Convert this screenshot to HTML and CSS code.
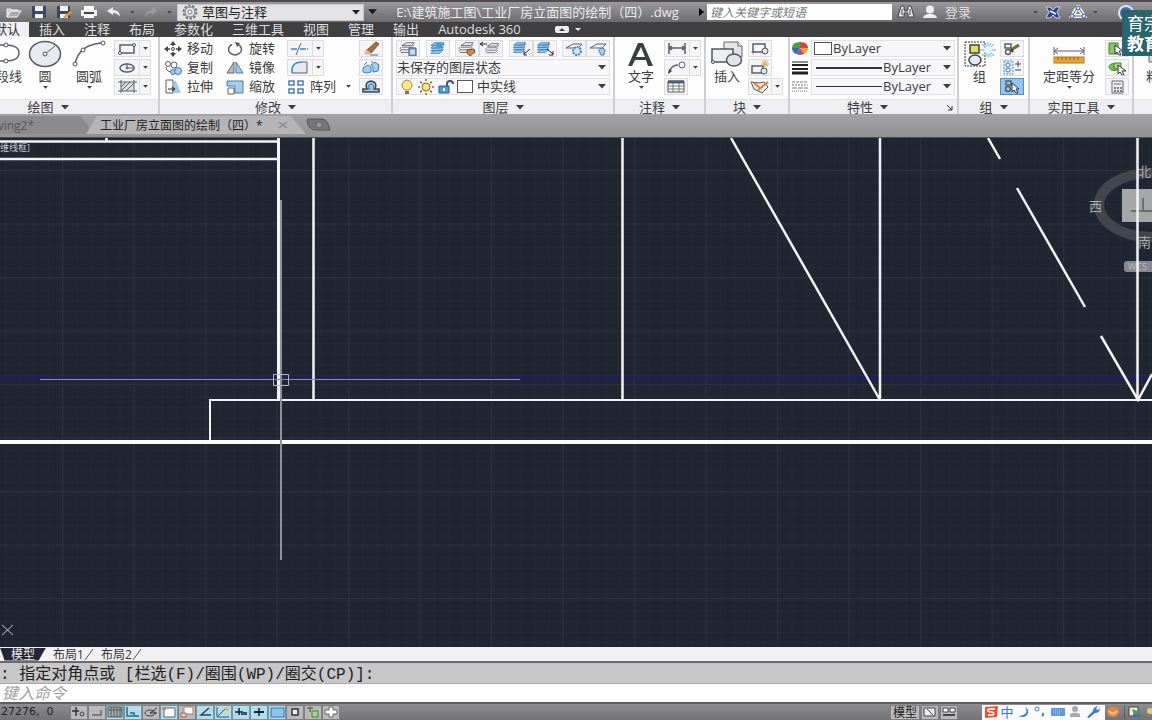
FILE: index.html
```html
<!DOCTYPE html>
<html lang="zh-CN">
<head>
<meta charset="utf-8">
<title>工业厂房立面图的绘制（四）.dwg</title>
<link rel="stylesheet" href="styles.css">
</head>
<body>
<svg class="defs" aria-hidden="true">
  <symbol id="caret" viewBox="0 0 8 5"><path d="M0 0h8L4 4.500z" fill="currentColor"/></symbol>
  <symbol id="layer" viewBox="0 0 24 17"><path class="g" d="M7 4l3-2h9l-3 3H5zM5 7l11 0 3-3M4 10h11l3-3M4 13h10l4-3M4 7l-1 2M4 10l-1 2"/></symbol>
  <symbol id="stacked" viewBox="0 0 24 17"><path class="p" d="M8 2h11l-4 3H4zM7 5l12-1-4 4H4zM7 8l11-1-3 4H4zM7 11l11-1-4 4H4z"/></symbol>
</svg>

<header class="titlebar">
  <div class="quick">
    <button aria-label="打开"><svg width="18" height="14"><path d="M2 12V4h4l1 1h6v2" fill="#ccc" stroke="#eee"/><path d="M2 12l4-6h10l-4 6z" fill="#aaa" stroke="#f5f5f5"/></svg></button>
    <button aria-label="保存"><svg width="16" height="14"><rect x="1" y="1" width="14" height="12" rx="1" fill="#3c465c"/><path d="M4 1h8v5H4zM4 9h8v4H4z" fill="#f1f1f1"/></svg></button>
    <button aria-label="另存为"><svg width="16" height="14"><rect x="1" y="1" width="13" height="12" rx="1" fill="#3c465c"/><path d="M4 1h8v5H4zM4 9h8v4H4z" fill="#f1f1f1"/><path d="M7 12l7-6 2 2-6 5z" fill="#d99b3c"/></svg></button>
    <button aria-label="打印"><svg width="18" height="14"><path d="M4 1h10v4H4z" fill="#fff"/><path d="M1 5h16v6H1z" fill="#eee"/><path d="M4 8h10" stroke="#444" stroke-width="2"/><path d="M4 10h10v3H4z" fill="#fff"/></svg></button>
    <button aria-label="放弃"><svg width="16" height="12"><path d="M1 5l6-4v3q7 0 7 7-2-4-7-4v2z" fill="#eee"/></svg></button>
    <button class="thin dark" aria-label="放弃列表"><svg width="5" height="3"><use href="#caret"/></svg></button>
    <button aria-label="重做"><svg width="16" height="12"><path d="M15 5L9 1v3Q2 4 2 11q2-4 7-4v2z" fill="#999"/></svg></button>
    <button class="thin dark" aria-label="重做列表"><svg width="5" height="3"><use href="#caret"/></svg></button>
  </div>
  <div class="workspace">
    <svg width="18" height="16" viewBox="0 0 18 16"><circle cx="9" cy="8" r="6.500" fill="none" stroke="#777" stroke-width="2" stroke-dasharray="2.500 1.500"/><circle cx="9" cy="8" r="5" fill="#e3e2e5" stroke="#777"/><circle cx="9" cy="8" r="2" fill="#fff" stroke="#777"/></svg>
    <select aria-label="工作空间"><option>草图与注释</option></select>
    <svg class="arrow" width="8" height="5"><use href="#caret"/></svg>
  </div>
  <button class="thin black" aria-label="自定义"><svg width="9" height="6"><use href="#caret"/></svg></button>
  <div class="filename">E:\建筑施工图\工业厂房立面图的绘制（四）.dwg</div>
  <button class="thin black" aria-label="展开"><svg width="5" height="8"><path d="M0 0l5 4-5 4z"/></svg></button>
  <input class="search" type="text" aria-label="搜索" placeholder="键入关键字或短语">
  <div class="account">
    <button aria-label="查找"><svg width="18" height="14"><path d="M4 1h3v4h4V1h3l3 11h-6V8H7v4H1z" fill="#e9e9e9" stroke="#444"/><path d="M5 4v6M13 4v6M7 6h4" stroke="#444"/></svg></button>
    <button aria-label="用户"><svg width="16" height="14"><ellipse cx="8" cy="4.500" rx="4" ry="4" fill="#eee"/><path d="M1 13q0-3 5-4h4q5 1 5 4z" fill="#eee"/></svg></button>
    <a class="login" href="#login">登录</a>
  </div>
  <div class="help">
    <button class="thin dark" aria-label="登录菜单"><svg width="5" height="3"><use href="#caret"/></svg></button>
    <button aria-label="交换"><svg width="16" height="13"><path d="M1 1h4l3 3 3-3h4l-3 5 3 6h-4L8 9l-3 3H1l3-6z" fill="#27448f" stroke="#cdd6ec"/><path d="M5 5l6 3" stroke="#fff" stroke-width="1.500"/></svg></button>
    <button aria-label="连接"><svg width="18" height="14"><path d="M9 2L3 11h12z" fill="none" stroke="#fff" stroke-width="4"/><path d="M9 2L3 11h12z" fill="none" stroke="#3f5590"/><circle cx="9" cy="3" r="2" fill="#dfe6f5" stroke="#3f5590"/><circle cx="3" cy="11" r="2" fill="#dfe6f5" stroke="#3f5590"/><circle cx="15" cy="11" r="2" fill="#dfe6f5" stroke="#3f5590"/></svg></button>
    <button class="thin dark" aria-label="连接菜单"><svg width="5" height="3"><use href="#caret"/></svg></button>
    <button class="ask" aria-label="帮助"><svg width="18" height="14"><circle cx="9" cy="8" r="7" fill="#456bb0" stroke="#dce4f2" stroke-width="2"/></svg></button>
  </div>
</header>
<div class="badge"><span>育宗</span><b>教育</b></div>

<nav class="menu">
  <div class="first"><a href="#home">默认</a></div>
  <a href="#insert">插入</a><a href="#annotate">注释</a><a href="#layout">布局</a><a href="#param">参数化</a><a href="#tools">三维工具</a><a href="#view">视图</a><a href="#manage">管理</a><a href="#output">输出</a><a href="#a360">Autodesk 360</a>
  <button aria-label="最小化功能区"><svg width="26" height="8"><rect width="14" height="7" rx="2" fill="#eee"/><path d="M4 5l3-3 3 3z" fill="#444"/><path d="M20 2h6l-3 3z" fill="#eee"/></svg></button>
</nav>

<main class="ribbon">
  <section class="panel draw">
    <div class="body">
      <button class="big cut"><svg width="38" height="32"><path class="g w" d="M0 7h20q14 0 14 8t-14 8h-5"/><circle class="n" cx="21" cy="7" r="2"/><circle class="n" cx="21" cy="23" r="2"/></svg><span>多段线</span><i></i></button>
      <button class="big"><svg width="34" height="32"><ellipse cx="17" cy="16" rx="15.500" ry="12.500" fill="#e8eaf0" stroke="#555c66" stroke-width="1.500"/><path class="g" d="M17 16l10-8"/><circle class="n" cx="17" cy="16" r="2"/></svg><span>圆</span><svg width="5" height="3"><use href="#caret"/></svg></button>
      <button class="big"><svg width="34" height="32"><path class="g w" d="M3 26Q7 6 31 5"/><circle class="n" cx="3" cy="26" r="2"/><circle class="n" cx="11" cy="12" r="2"/><circle class="n" cx="31" cy="5" r="2"/></svg><span>圆弧</span><svg width="5" height="3"><use href="#caret"/></svg></button>
      <div class="stack">
        <div class="split"><button aria-label="矩形"><svg width="24" height="15"><path class="g w" d="M5 4h14v8H5z"/><circle class="n" cx="5" cy="12" r="1.500"/><circle class="n" cx="19" cy="4" r="1.500"/></svg></button><button aria-label="矩形选项"><svg width="5" height="3"><use href="#caret"/></svg></button></div>
        <div class="split"><button aria-label="椭圆"><svg width="24" height="15"><ellipse class="g w" cx="12" cy="8" rx="7" ry="4"/><path class="g" d="M12 8V3M12 8h8"/><circle class="n" cx="12" cy="8" r="1"/></svg></button><button aria-label="椭圆选项"><svg width="5" height="3"><use href="#caret"/></svg></button></div>
        <div class="split"><button aria-label="图案填充"><svg width="24" height="15"><path d="M6 3h13v9H6z" fill="#ddd"/><path class="g" d="M6 8l5-5M6 12l9-9M11 12l8-8M3 3h19M3 12h19M6 1v13M19 1v13"/></svg></button><button aria-label="填充选项"><svg width="5" height="3"><use href="#caret"/></svg></button></div>
      </div>
    </div>
    <button class="foot">绘图<svg width="8" height="5"><use href="#caret"/></svg></button>
  </section>

  <section class="panel modify">
    <div class="body">
      <button class="tool"><svg width="18" height="16"><path d="M9 2v12M2 8h14" stroke="#444" stroke-width="1.500"/><path d="M9 0l3 4H6zM9 16l3-4H6zM0 8l4-3v6zM18 8l-4-3v6z" fill="#444"/><circle cx="9" cy="8" r="3" fill="#fff"/><circle cx="9" cy="8" r="1.500" fill="#fff" stroke="#444"/></svg>移动</button>
      <button class="tool"><svg width="18" height="16"><path class="g w" d="M6 3.500a6.500 5.500 0 1 0 6 0"/><path d="M9 1l5 1-3 4z" fill="#555"/></svg>旋转</button>
      <div class="split"><button aria-label="修剪"><svg width="24" height="15"><path d="M3 8h7M12 8h8" stroke="#2e8bd0" stroke-width="1.500" stroke-dasharray="6 1"/><path class="g" d="M8 14l5-12"/></svg></button><button aria-label="修剪选项"><svg width="5" height="3"><use href="#caret"/></svg></button></div>
      <button class="sq" aria-label="删除"><svg width="22" height="15"><path d="M7 9l9-8 3 2-8 9z" fill="#a9703e" stroke="#70502f"/><path d="M6 8l5 4-2 2-5-1z" fill="#e9b49b"/><path class="g" d="M10 14h8"/></svg></button>
      <button class="tool"><svg width="18" height="16"><circle class="g" cx="4" cy="4" r="2.500"/><circle class="g" cx="10" cy="5" r="3"/><path d="M2 7q0 4 5 5" fill="none" stroke="#555"/><circle class="p" cx="9" cy="12" r="2.500"/><circle class="p" cx="14" cy="11" r="3.500"/></svg>复制</button>
      <button class="tool"><svg width="18" height="16"><path d="M8 2v11H1z" fill="#bbb" stroke="#666"/><path class="p" d="M10 2v11h7z"/></svg>镜像</button>
      <div class="split"><button aria-label="圆角"><svg width="24" height="15"><path d="M4 13V9Q5 2 14 2h5v11z" fill="#e6e8ed"/><path d="M4 13V9Q5 2 14 2" fill="none" stroke="#2e8bd0" stroke-width="1.500"/><path class="g" d="M14 2h5v11H4"/></svg></button><button aria-label="圆角选项"><svg width="5" height="3"><use href="#caret"/></svg></button></div>
      <button class="sq" aria-label="分解"><svg width="22" height="15"><path class="p" d="M3 8l5-3 3 2v5l-4 1-4-1zM11 5l4-3 4 3-1 6-5 1V7z"/><path d="M4 5l3-3M12 3V1" stroke="#2e7dbb"/></svg></button>
      <button class="tool"><svg width="18" height="16"><path class="g" d="M2 1h7v13H2z"/><path d="M10 2h2l5 12h-7z" fill="#9dccef"/><path d="M4 10h6M8 8l3 2-3 2" fill="none" stroke="#222"/></svg>拉伸</button>
      <button class="tool"><svg width="18" height="16"><path class="p" d="M1 2h16v12H9V7H1z"/><path class="g" d="M2 9h6v6H2z"/></svg>缩放</button>
      <button class="tool"><svg width="18" height="16"><path d="M2 2h5v4H2zM11 2h5v4h-5zM11 10h5v4h-5zM2 10h5v4H2z" fill="#fff" stroke="#4a7fb0" stroke-width="1.500"/></svg>阵列<svg class="right" width="5" height="3"><use href="#caret"/></svg></button>
      <button class="sq" aria-label="偏移"><svg width="22" height="15"><path d="M3 13v-3h4Q4 3 11 2q7 1 4 8h4v3z" fill="#9dccef" stroke="#345" stroke-width="1.500"/><path class="g" d="M7 10h3Q7 6 11 5q4 1 2 5h2"/></svg></button>
    </div>
    <button class="foot">修改<svg width="8" height="5"><use href="#caret"/></svg></button>
  </section>

  <section class="panel layers">
    <div class="body rows">
      <div class="row spread">
        <button class="sq" aria-label="图层特性"><svg width="22" height="15"><use href="#layer" width="22" height="15"/><path d="M12 7h7v8h-7z" fill="#8fb7dd" stroke="#456"/><path d="M13 10h5M13 12h5" stroke="#fff"/></svg></button>
        <button class="sq" aria-label="置为当前"><svg width="22" height="15"><use href="#stacked" width="22" height="15"/><circle cx="12" cy="4" r="3" fill="#4b9bd8"/></svg></button>
        <div class="pair"><button class="sq" aria-label="匹配图层"><svg width="22" height="15"><use href="#layer" width="22" height="15"/><path d="M11 9l7-1 1 3-5 4-3-3z" fill="#d58a43" stroke="#7a4a22"/></svg></button><button class="sq" aria-label="上一个图层"><svg width="22" height="15"><g transform="translate(3 1)"><use href="#layer" width="20" height="14"/></g><path d="M1 3h6M3 1L0 3l3 2" stroke="#222" fill="none"/></svg></button></div>
        <div class="pair"><button class="sq" aria-label="隔离"><svg width="22" height="15"><use href="#stacked" width="20" height="14"/><path d="M20 8l-6 5M14 10v4h3" stroke="#222" fill="none"/></svg></button><button class="sq" aria-label="取消隔离"><svg width="22" height="15"><use href="#stacked" width="20" height="14"/><path d="M13 8l6 5M19 10v4h-4" stroke="#222" fill="none"/></svg></button></div>
        <div class="pair"><button class="sq" aria-label="冻结"><svg width="22" height="15"><path class="g" d="M3 7l7-4h9l-4 4z"/><circle cx="14" cy="10" r="4" fill="#cfe6f8" stroke="#3a86c4" stroke-width="2" stroke-dasharray="2 1"/></svg></button><button class="sq" aria-label="关闭图层"><svg width="22" height="15"><path class="g" d="M3 7l7-4h9l-4 4z"/><path class="p" d="M13 12q-3-4 2-5 5 1 2 5v2h-3z"/></svg></button></div>
      </div>
      <div class="combo"><select aria-label="图层状态"><option>未保存的图层状态</option></select><svg class="arrow" width="8" height="5"><use href="#caret"/></svg></div>
      <div class="combo icons">
        <button aria-label="开关图层"><svg width="16" height="16"><path d="M6 11Q2 8 3 5q2-4 5-4t5 4q1 3-3 6z" fill="#ffe98a" stroke="#a48c32"/><path d="M6 12h4v3H6z" fill="#777"/></svg></button>
        <button aria-label="冻结图层"><svg width="18" height="16"><circle cx="9" cy="8" r="4" fill="#ffe08a" stroke="#8a6d25"/><path d="M9 0v2M9 14v2M1 8h2M15 8h2M3 3l2 1M13 12l2 1M3 13l2-1M13 4l2-1" stroke="#8a6d25" stroke-width="1.500"/></svg></button>
        <button aria-label="锁定图层"><svg width="18" height="16"><path d="M10 7V5q0-3 3-3 3 0 3 3" fill="none" stroke="#456" stroke-width="2"/><path d="M2 7h10v7H2z" fill="#4d9ad4" stroke="#275f8e"/><path d="M6 9h2v3H6z" fill="#fff"/></svg></button>
        <span class="swatch"></span>
        <select aria-label="图层"><option>中实线</option></select><svg class="arrow" width="8" height="5"><use href="#caret"/></svg>
      </div>
    </div>
    <button class="foot">图层<svg width="8" height="5"><use href="#caret"/></svg></button>
  </section>

  <section class="panel annotate">
    <div class="body">
      <button class="big"><svg width="30" height="32"><path d="M2 28L12 5h5l10 23h-5l-2-6H9l-3 6zM10 19h9l-4-10z" fill="#3c3f45"/></svg><span>文字</span><svg width="5" height="3"><use href="#caret"/></svg></button>
      <div class="stack">
        <div class="split"><button aria-label="标注"><svg width="24" height="15"><path class="g w" d="M4 2v11M20 2v11M4 7h16M7 5L4 7l3 2M17 5l3 2-3 2"/></svg></button><button aria-label="标注选项"><svg width="5" height="3"><use href="#caret"/></svg></button></div>
        <div class="split"><button aria-label="引线"><svg width="24" height="15"><path class="g w" d="M4 13q2-8 9-8"/><circle class="g" cx="17" cy="5" r="3"/><path d="M3 14l1-5 3 2z" fill="#444"/></svg></button><button aria-label="引线选项"><svg width="5" height="3"><use href="#caret"/></svg></button></div>
        <button class="sq" aria-label="表格"><svg width="22" height="15"><path d="M3 2h16v11H3z" fill="#fff" stroke="#555"/><path d="M3 3h16" stroke="#4c5f7c" stroke-width="3"/><path d="M3 7h16M3 10h16M8 4v9M14 4v9" stroke="#777"/></svg></button>
      </div>
    </div>
    <button class="foot">注释<svg width="8" height="5"><use href="#caret"/></svg></button>
  </section>

  <section class="panel block">
    <div class="body">
      <button class="big"><svg width="34" height="32"><path d="M14 4h14l4 4v11H14z" fill="#e2e4ea" stroke="#666"/><path d="M28 4v4h4" fill="#fff" stroke="#666"/><path d="M2 11h21v13H2z" fill="#eceef3" stroke="#555" stroke-width="1.500"/><ellipse cx="24" cy="22" rx="7.500" ry="6" fill="#e2e4ea" stroke="#555" stroke-width="1.500"/><circle class="n" cx="3" cy="24" r="1.500"/></svg><span>插入</span><i></i></button>
      <div class="stack">
        <button class="sq" aria-label="创建块"><svg width="22" height="15"><path class="g w" d="M4 3h12v8H4z"/><circle cx="16" cy="10" r="3" fill="#e2e4ea" stroke="#555"/><circle class="n" cx="4" cy="11" r="1"/></svg></button>
        <button class="sq" aria-label="编辑块"><svg width="22" height="15"><path class="g w" d="M3 6h11v7H3z"/><circle cx="15" cy="11" r="3" fill="#d8e6f4" stroke="#456"/><path d="M16 0v7M12 4h8M13 1l6 5M19 1l-6 5" stroke="#e5a33c"/></svg></button>
        <div class="split"><button aria-label="块属性"><svg width="22" height="15"><path d="M2 3l8 1 5-1 4 5-6 6-8-4z" fill="#eee" stroke="#555"/><path d="M5 4l6 5M9 11l10-8" fill="none" stroke="#d58234" stroke-width="2"/></svg></button><button aria-label="块属性选项"><svg width="5" height="3"><use href="#caret"/></svg></button></div>
      </div>
    </div>
    <button class="foot">块<svg width="8" height="5"><use href="#caret"/></svg></button>
  </section>

  <section class="panel props">
    <div class="body rows">
      <div class="row"><svg width="18" height="15"><path d="M9 7L1 7Q1 1 9 1z" fill="#4d9c4c"/><path d="M9 7V1q8 0 8 6z" fill="#d4453a"/><path d="M9 7h8q0 4-4 6z" fill="#e8a52d"/><path d="M9 7l4 6q-4 2-8 0z" fill="#b04a92"/><path d="M9 7l-4 6Q1 11 1 7z" fill="#3568c2"/></svg><div class="combo"><span class="swatch"></span><select aria-label="颜色"><option>ByLayer</option></select><svg class="arrow" width="8" height="5"><use href="#caret"/></svg></div></div>
      <div class="row"><svg width="18" height="15"><path d="M1 2h16" stroke="#222"/><path d="M1 5h16" stroke="#222" stroke-width="2"/><path d="M1 9h16" stroke="#222" stroke-width="2"/><path d="M1 13h16" stroke="#222" stroke-width="3"/></svg><div class="combo"><span class="line heavy"></span><select aria-label="线宽"><option>ByLayer</option></select><svg class="arrow" width="8" height="5"><use href="#caret"/></svg></div></div>
      <div class="row"><svg width="18" height="15"><path d="M1 3h16" stroke="#777" stroke-dasharray="3 1"/><path d="M1 6h16" stroke="#777" stroke-dasharray="2 1"/><path d="M1 9h16" stroke="#777" stroke-dasharray="5 1"/><path d="M1 12h16" stroke="#777" stroke-dasharray="1 1"/></svg><div class="combo"><span class="line"></span><select aria-label="线型"><option>ByLayer</option></select><svg class="arrow" width="8" height="5"><use href="#caret"/></svg></div></div>
    </div>
    <button class="foot">特性<svg width="8" height="5"><use href="#caret"/></svg><svg class="corner" width="6" height="6"><path d="M0 0l5 5M5 1v4H1" stroke="#333" fill="none"/></svg></button>
  </section>

  <section class="panel group">
    <div class="body">
      <button class="big"><svg width="34" height="32"><rect x="2" y="4" width="20" height="24" fill="#f7f7f7" stroke="#333" stroke-dasharray="2 1"/><path d="M7 7h9v8H7z" fill="#dbe05a" stroke="#444" stroke-width="1.500"/><ellipse cx="12" cy="22" rx="6" ry="5" fill="#e7eaf0" stroke="#444" stroke-width="1.500"/><path d="M25 4v16M17 12h16M19 6l12 12M31 6L19 18M22 5l6 14M28 5l-6 14" stroke="#5aaee6"/><circle cx="25" cy="12" r="4" fill="#e7f6ff"/></svg><span>组</span><i></i></button>
      <div class="stack">
        <button class="sq" aria-label="解除编组"><svg width="22" height="15"><path class="g w" d="M4 3h6v4H4z"/><circle class="g w" cx="7" cy="11" r="2.500"/><path d="M10 9l8-5" stroke="#7c6a2e" stroke-width="3"/><path d="M10 8l2 3" stroke="#333" stroke-width="2"/></svg></button>
        <button class="sq" aria-label="组编辑"><svg width="22" height="15"><rect x="3" y="1" width="9" height="13" fill="#d6e8f8" stroke="#5b93c4" stroke-dasharray="2 1"/><circle cx="7" cy="5" r="2" fill="#fff" stroke="#47a"/><circle cx="7" cy="10" r="2" fill="#fff" stroke="#47a"/><path d="M14 4h6M17 1v6M14 10h6" stroke="#444"/></svg></button>
        <button class="sq on" aria-label="启用组选择" aria-pressed="true"><svg width="22" height="15"><path class="g w" d="M5 2h5v4H5z"/><circle class="g w" cx="7" cy="10" r="2.500"/><path d="M11 4l7 6-3 0 2 4-2 0-2-3-2 2z" fill="#fff" stroke="#234"/></svg></button>
      </div>
    </div>
    <button class="foot">组<svg width="8" height="5"><use href="#caret"/></svg></button>
  </section>

  <section class="panel utils">
    <div class="body">
      <button class="big"><svg width="34" height="32"><path class="g" d="M2 9v8M32 9v8M2 13h30M6 10l-4 3 4 3M28 10l4 3-4 3"/><rect x="2" y="19" width="30" height="6" fill="#e8a436" stroke="#b77a1c"/><path d="M6 19v3M10 19v3M14 19v3M18 19v3M22 19v3M26 19v3" stroke="#8a5a12"/></svg><span>定距等分</span><svg width="5" height="3"><use href="#caret"/></svg></button>
      <div class="stack">
        <button class="sq" aria-label="快速选择"><svg width="22" height="15"><path d="M3 2h9v11H3z" fill="#8ac46c" stroke="#43862a"/><path d="M9 4l8 6-4 0 2 4-2 0-2-3-2 2z" fill="#fff" stroke="#333"/></svg></button>
        <button class="sq" aria-label="全部选择"><svg width="22" height="15"><ellipse cx="8" cy="7" rx="5" ry="3.500" fill="#7fbd62" stroke="#43862a"/><path d="M8 3h7v6H8z" fill="#a5d68c" stroke="#43862a"/><path d="M12 5l8 6-4 0 2 4-2 0-2-3-2 2z" fill="#fff" stroke="#333"/></svg></button>
        <button class="sq" aria-label="计算器"><svg width="22" height="15"><path d="M6 2h11v12H6z" fill="#eef0f3" stroke="#666"/><path d="M8 4h7v2H8z" fill="#aab"/><path d="M8 9h8M8 12h8" stroke="#555" stroke-width="1.500" stroke-dasharray="2 1"/></svg></button>
      </div>
    </div>
    <button class="foot">实用工具<svg width="8" height="5"><use href="#caret"/></svg></button>
  </section>

  <section class="panel clip">
    <div class="body">
      <button class="big"><svg width="34" height="32"><path d="M7 9h18v15H7z" fill="#ddd" stroke="#666"/></svg><span>粘贴</span></button>
    </div>
    <div class="foot"></div>
  </section>
</main>

<nav class="docs">
  <a class="doc prev" href="#drawing2"><span>Drawing2*</span></a>
  <div class="doc current"><a href="#factory">工业厂房立面图的绘制（四）*</a><button aria-label="关闭"><svg width="10" height="8"><path d="M1 1l8 6M9 1L1 7" stroke="#888" stroke-width="1.500"/></svg></button></div>
  <button class="plus" aria-label="新建"><svg width="26" height="14"><path d="M1 2q0-1 2-1h13q4 0 6 5l2 6H10Q2 12 1 2z" fill="#777" stroke="#555"/><circle cx="13" cy="7" r="3" fill="#999" stroke="#666"/></svg></button>
</nav>

<section class="canvas">
  <svg width="100%" height="100%">
    <defs>
      <pattern id="minor" width="14.300" height="10.700" patternUnits="userSpaceOnUse" x="5" y="1.700"><path d="M0 .5h14.300M.5 0v10.700" stroke="#232a36" fill="none"/></pattern>
      <pattern id="major" width="71.500" height="53.500" patternUnits="userSpaceOnUse" x="62" y="32"><path d="M0 .5h71.500M.5 0v53.500" stroke="#2a303d" fill="none"/></pattern>
    </defs>
    <rect width="100%" height="100%" fill="#1f2531"/>
    <rect width="100%" height="100%" fill="url(#minor)"/>
    <rect width="100%" height="100%" fill="url(#major)"/>
    <g transform="translate(0 -138)">
      <ellipse cx="1151" cy="205" rx="52" ry="32" fill="none" stroke="#41464f" stroke-width="10"/>
      <rect x="1122" y="189" width="60" height="33" fill="#a5a6a8"/>
      <path d="M1131 211h40M1143 198v13" stroke="#6c6e73" stroke-width="2"/>
      <rect x="1124" y="261" width="50" height="11" rx="3" fill="#858890"/>
      <g class="compass"><text x="1138" y="176">北</text><text x="1138" y="247">南</text><text x="1089" y="211">西</text><text class="wcs" x="1128" y="270">WCS</text></g>
      <path d="M0 378.500h2400" stroke="#1c1d6b" stroke-width="3"/>
      <g fill="none" stroke="#f2f3f7" stroke-width="2.500">
        <path d="M0 141.500h279M0 159h279M106.500 137v4M313.500 137v263M622.500 137v263M880 137v263M1137.500 137v263M731 138l149 262M988 138l12 21M1017 188l68 119M1101 336l37 64 14-26"/>
        <path d="M278.500 137v263" stroke-width="3"/>
        <path d="M210 441v-41H2400" stroke-width="2"/>
        <path d="M0 442h2400" stroke="#fff" stroke-width="4"/>
      </g>
      <path d="M40 379.500h480" stroke="#878aa8"/>
      <path d="M281 200v360" stroke="#8f9299" stroke-width="2"/>
      <path d="M273.500 374.500h15v11h-15z" fill="none" stroke="#b2b4bc"/>
      <path d="M2 625l11 10M13 625l-11 10" stroke="#c7c9ce"/>
      <text class="mode" x="0" y="151">维线框]</text>
    </g>
  </svg>
</section>

<nav class="sheets">
  <a class="on" href="#model">模型</a><a href="#l1">布局1</a><svg width="10" height="13"><path d="M1 12L9 1" stroke="#555"/></svg><a href="#l2">布局2</a><svg width="10" height="13"><path d="M1 12L9 1" stroke="#555"/></svg>
</nav>

<section class="command">
  <div class="history">: 指定对角点或 [栏选(F)/圈围(WP)/圈交(CP)]:</div>
  <input type="text" aria-label="命令" placeholder="键入命令">
</section>

<footer class="status">
  <span class="coords">27276,&nbsp; 0</span>
  <div class="modes">
    <button aria-label="推断约束"><svg width="16" height="12"><path d="M1 5h7M5 1v9" stroke="#333" stroke-width="1.500"/><circle cx="11" cy="8" r="2" fill="none" stroke="#444"/></svg></button>
    <button aria-label="捕捉"><svg width="16" height="12"><path d="M3 9h9V4" fill="none" stroke="#666" stroke-width="1.500"/></svg></button>
    <button class="on" aria-label="栅格"><svg width="16" height="12"><path d="M1 1h14v10H1z" fill="#a9b2b7" stroke="#555"/><path d="M4 1v10M7 1v10M10 1v10M13 1v10M1 4h14" stroke="#555"/></svg></button>
    <button class="on" aria-label="正交"><svg width="16" height="12"><path d="M2 1v9h12M5 7h4v3" fill="none" stroke="#266b86" stroke-width="1.500"/></svg></button>
    <button aria-label="极轴"><svg width="16" height="12"><ellipse cx="7" cy="7" rx="5" ry="3" fill="none" stroke="#444"/><path d="M7 7l7-5M7 7h7" stroke="#333"/></svg></button>
    <button class="on" aria-label="对象捕捉"><svg width="16" height="12"><path d="M3 2h11v9H3z" fill="#fff" stroke="#567"/><path d="M1 1h4v3H1z" fill="#d98950"/></svg></button>
    <button aria-label="三维捕捉"><svg width="16" height="12"><path d="M5 1h9v7H5z" fill="#fff" stroke="#b76"/><path d="M2 7h5v4H2z" fill="#e6cfc5" stroke="#a65"/></svg></button>
    <button class="on" aria-label="追踪"><svg width="16" height="12"><path d="M12 2L4 9h10" fill="none" stroke="#246" stroke-width="1.500"/></svg></button>
    <button class="on" aria-label="动态UCS"><svg width="16" height="12"><path d="M2 1v10h12M3 10l7-7" fill="none" stroke="#357"/><circle cx="12" cy="3" r="2" fill="#e0bd45"/></svg></button>
    <button class="on" aria-label="动态输入"><svg width="16" height="12"><path d="M2 6h8M6 2v7" stroke="#123" stroke-width="1.500"/><path d="M8 6h6v3H8z" fill="#357"/></svg></button>
    <button class="on" aria-label="线宽"><svg width="16" height="12"><path d="M3 6h10" stroke="#123" stroke-width="2"/><path d="M8 2v8" stroke="#123" stroke-width="1.500"/></svg></button>
    <button class="on" aria-label="透明度"><svg width="16" height="12"><rect x="2" y="2" width="13" height="9" fill="#8fc3ee" stroke="#3775aa"/></svg></button>
    <button aria-label="快捷特性"><svg width="16" height="12"><path d="M5 3h6v6H5z" fill="#eee" stroke="#333" stroke-width="1.500"/></svg></button>
    <button aria-label="选择循环"><svg width="16" height="12"><path d="M2 2h6M5 1v5" stroke="#444"/><path d="M7 5h6v6H7z" fill="#a5d68c" stroke="#43862a"/></svg></button>
    <button aria-label="注释监视器"><svg width="16" height="12"><path d="M6 1h4v3h4v4h-4v3H6V8H2V4h4z" fill="#fff" stroke="#666"/></svg></button>
  </div>
  <div class="space"><button class="name">模型</button>
    <button aria-label="布局"><svg width="16" height="12"><path d="M2 2h11v8H2z" fill="#eee" stroke="#444"/><path d="M5 3l6 6" stroke="#444"/></svg></button>
    <button aria-label="快速查看"><svg width="16" height="12"><path d="M2 2h5v4H2zM9 2h5v4H9z" fill="#fff" stroke="#444"/><path d="M2 9h12" stroke="#444" stroke-width="2"/></svg></button>
  </div>
  <div class="ime">
    <svg width="16" height="14"><path d="M2 2l13-1-1 11-12 1z" fill="#df5534"/><path d="M12 4H7q-3 0-2 2 1 1 4 1 3 1 1 3H5" fill="none" stroke="#fff" stroke-width="1.500"/></svg>
    <span>中</span>
    <svg width="16" height="14"><path d="M10 2q5 8-7 9 8 3 10-3 1-4-3-6z" fill="#3d7fc9"/></svg>
    <svg width="16" height="14"><circle cx="5" cy="4" r="2" fill="none" stroke="#3d7fc9"/><path d="M11 8v2l-1 1" stroke="#3d7fc9" stroke-width="2" fill="none"/></svg>
    <svg width="16" height="14"><rect x="1" y="3" width="14" height="8" rx="1" fill="#5c98d8"/><path d="M3 5h10M3 7h10M5 9h6" stroke="#a9caee" stroke-dasharray="1 1"/></svg>
    <svg width="16" height="14"><circle cx="8" cy="4" r="3" fill="#aaa"/><path d="M3 12V9q5-3 10 0v3z" fill="#aaa"/></svg>
    <svg width="16" height="14"><path d="M2 12l6-6q0-4 5-5l-2 3 2 1 2-2q0 5-5 5l-6 5z" fill="#3d7fc9"/></svg>
  </div>
  <div class="tray">
    <svg width="14" height="12"><ellipse cx="7" cy="6" rx="6" ry="5" fill="#ec8536"/><path d="M3 5q4 5 8 0" stroke="#f9cfa5" fill="none" stroke-width="2"/></svg>
    <svg width="28" height="14"><path d="M0 0v14" stroke="#444"/><path d="M5 2h9v9H5z" fill="#eee" stroke="#444"/><path d="M8 4l9 3-7 4z" fill="#5c9b42"/><path d="M9 9h8v3H9z" fill="#4272b8"/><circle cx="26" cy="6" r="3" fill="#d8d27c"/></svg>
  </div>
</footer>
</body>
</html>
```

FILE: styles.css
```css
* { box-sizing: border-box; }
body {
  margin: 0;
  height: 100vh;
  display: flex;
  flex-direction: column;
  overflow: hidden;
  position: relative;
  font: 13px/15px "Open Sans", "Noto Sans CJK SC", sans-serif;
  color: #3d3d40;
}
button, select, input { font: inherit; color: inherit; margin: 0; padding: 0; border: 0; background: none; }
button { display: flex; align-items: center; justify-content: center; white-space: nowrap; }
select { appearance: none; outline: 0; min-width: 0; }
a { color: inherit; text-decoration: none; white-space: nowrap; }
svg { display: block; flex: none; }
.defs { position: absolute; width: 0; height: 0; }
.g { fill: none; stroke: #5a606a; stroke-width: 1; }
.w { stroke-width: 1.5; }
.n { fill: #fff; stroke: #4a4f58; }
.p { fill: #a4cdee; stroke: #3f7fb3; }

/* Title bar */
.titlebar {
  flex: none;
  height: 22px;
  display: flex;
  align-items: center;
  border-top: 2px solid #514a50;
  background: linear-gradient(#9a999c, #6c6b6e);
}
.quick, .account, .help { display: flex; align-items: center; }
.quick { padding-left: 1px; padding-right: 2px; }
.quick button { width: 25px; }
.quick .thin, .thin { width: 12px; flex: none; }
.dark { color: #4a4a4c; }
.black { color: #161616; }
.workspace {
  width: 187px;
  height: 17px;
  display: flex;
  align-items: center;
  gap: 3px;
  padding: 0 3px;
  background: #e3e2e5;
  border: 1px solid #c8c7ca;
  color: #222;
}
.workspace select { flex: 1; }
.titlebar .workspace + .thin { width: 16px; }
.filename {
  flex: 1;
  text-align: center;
  white-space: nowrap;
  overflow: hidden;
  color: #ececee;
}
.search { width: 185px; height: 16px; background: #fff; padding-left: 3px; font-size: 12px; }
.search::placeholder { font-style: italic; color: #77767a; opacity: 1; }
.account { padding-left: 2px; width: 138px; }
.account button { width: 24px; }
.login { padding-left: 3px; color: #dedee0; }
.help button { width: 25px; }
.help .thin { width: 10px; }
.help { width: 122px; }
.help .ask { margin-left: 13px; }
.badge {
  position: absolute;
  top: 10px;
  right: 0;
  z-index: 1;
  width: 30px;
  height: 46px;
  padding: 3px 0 0 5px;
  overflow: hidden;
  display: flex;
  flex-direction: column;
  white-space: nowrap;
  background: #2c646e;
  color: #fff;
  font: 17px/20px "Noto Sans CJK SC", sans-serif;
}

/* Ribbon tabs */
.menu {
  flex: none;
  height: 15px;
  display: flex;
  align-items: center;
  gap: 19px;
  background: #403f41;
  color: #dededf;
}
.menu .first {
  width: 29px;
  height: 15px;
  margin-right: -9px;
  padding-right: 9px;
  display: flex;
  justify-content: flex-end;
  overflow: hidden;
  background: #f0eff2;
  color: #333;
}
.menu button { margin-left: 15px; }

/* Ribbon */
.ribbon { flex: none; display: flex; background: #fdfdfe; overflow: hidden; }
.panel { flex: none; display: flex; flex-direction: column; border-right: 2px solid #cfced3; }
.body { height: 62px; padding: 3px 3px 0; display: flex; }
.foot {
  height: 15px;
  gap: 7px;
  display: flex;
  position: relative;
  border-top: 1px solid #e3e2e6;
  background: #efeef2;
  line-height: 13px;
}
.corner { position: absolute; right: 4px; top: 5px; }
.big { flex-direction: column; justify-content: flex-start; width: 44px; overflow: hidden; line-height: 12px; margin-top: -2px; }
.big span { margin: 0 0 3px; line-height: 13px; }
.stack { display: grid; grid-template-rows: repeat(3, 17px); gap: 2px; justify-items: start; }
.sq, .split { border: 1px solid #dcdce1; background: #f5f5f8; height: 17px; }
.sq { width: 24px; }
.split { display: flex; justify-self: start; }
.split button { height: 15px; }
.split button + button { width: 11px; border-left: 1px solid #dcdce1; }
.on.sq { background: #93c4ee; border-color: #4f8fcb; }
.tool { justify-content: flex-start; gap: 5px; }
.tool .right { margin-left: 5px; }

.draw { width: 160px; }
.draw .body { padding-left: 0; }
.draw .cut { width: 23px; align-items: flex-end; }
.draw .cut span { margin-right: 1px; }
.draw .stack { margin-left: 3px; }
.draw .foot { padding-right: 62px; }
.modify { width: 233px; }
.modify .body {
  display: grid;
  grid-template-columns: 62px 61px 72px 24px;
  grid-template-rows: repeat(3, 17px);
  gap: 2px 0;
  padding-left: 4px;
}
.layers { width: 222px; }
.rows { flex-direction: column; gap: 2px; }
.row { display: flex; align-items: center; gap: 2px; height: 17px; }
.spread { justify-content: space-between; }
.pair { display: flex; }
.combo {
  flex: none;
  height: 17px;
  display: flex;
  align-items: center;
  border: 1px solid #e0e0e5;
  background: #f7f7fa;
  padding: 0 3px 0 0;
}
.combo select { flex: 1; }
.icons { gap: 2px; padding-left: 2px; }
.swatch { flex: none; width: 16px; height: 13px; border: 1px solid #555; background: #fff; margin-right: 2px; }
.annotate { width: 91px; }
.annotate .big { width: 47px; }
.block { width: 84px; }
.block .body { padding-left: 0; }
.block .big { width: 42px; }
.props { width: 169px; }
.props .body { padding: 3px 2px 0 1px; }
.props .combo { flex: 1; gap: 1px; padding-left: 2px; }
.props .swatch { margin: 0; width: 18px; }
.line { flex: none; width: 66px; margin-left: 2px; border-top: 1px solid #333; }
.heavy { border-top-width: 2px; }
.props .foot { padding-right: 12px; }
.group { width: 71px; }
.group .body { padding-left: 0; }
.group .big { width: 41px; }
.utils { width: 104px; }
.utils .big { width: 73px; }
.clip { flex: 1 0 18px; border: 0; overflow: hidden; width: 0; }
.clip .big { width: 44px; flex: none; }

/* Document tabs */
.docs {
  flex: none;
  height: 24px;
  display: flex;
  align-items: flex-end;
  padding-bottom: 3px;
  border-bottom: 1px solid #4d4d50;
  background: linear-gradient(#a3a2a5, #929194);
  font-size: 12px;
}
.doc { height: 18px; display: flex; align-items: center; }
.prev { width: 94px; color: #565558; background: #8b8a8d; overflow: hidden; justify-content: flex-end; padding-right: 60px; clip-path: polygon(0 0, 86% 0, 100% 100%, 0 100%); }
.current {
  width: 220px;
  margin-left: -8px;
  padding: 0 18px 0 14px;
  justify-content: space-between;
  background: #b5b4b7;
  color: #222;
  clip-path: polygon(5% 0, 93% 0, 100% 100%, 0 100%);
}
.plus { height: 18px; }

/* Drawing area */
.canvas { flex: 1; min-height: 0; overflow: hidden; background: #1f2531; }
.compass { font-size: 13px; fill: #a9abb0; }
.wcs { font-size: 9px; fill: #b9bbc0; }
.mode { font-size: 9px; fill: #cdced2; }

/* Layout tabs */
.sheets { flex: none; height: 14px; display: flex; align-items: center; background: #f1f0f3; font-size: 12px; line-height: 13px; color: #333; }
.sheets a { padding-left: 7px; }
.sheets .on { background: #222733; color: #eee; padding: 0 11px; clip-path: polygon(0 0, 100% 0, 84% 100%, 10% 100%); }

/* Command line */
.command { flex: none; display: flex; flex-direction: column; border-top: 2px solid #6c6b6e; }
.history {
  height: 21px;
  background: #c7c6c8;
  border-bottom: 1px solid #a9a8aa;
  font: 16px/24px "Liberation Mono", "Noto Sans CJK SC", monospace;
  color: #222;
  white-space: pre;
  overflow: hidden;
}
.command input { height: 18px; padding-left: 2px; background: #fff; font-size: 16px; }
.command input::placeholder { font-style: italic; color: #a3a2a5; opacity: 1; }

/* Status bar */
.status {
  flex: none;
  height: 18px;
  display: flex;
  align-items: center;
  border-top: 2px solid #5f5e60;
  background: linear-gradient(#8e8d90, #737275);
}
.coords { width: 70px; padding-left: 1px; font: 11px/14px "DejaVu Sans", sans-serif; color: #222; white-space: nowrap; }
.modes { display: flex; }
.modes button, .space button { width: 18px; height: 15px; border: 1px solid #7f7e81; background: #b9b8bb; }
.modes .on { background: #b4dceb; border-color: #7296a5; }
.space { display: flex; gap: 1px; margin-left: auto; margin-right: 24px; }
.space .name { width: 30px; color: #222; font-size: 12px; }
.ime { display: flex; align-items: center; justify-content: space-between; width: 123px; height: 15px; padding: 0 4px 0 1px; background: #fafafc; color: #2f77c5; }
.tray { display: flex; align-items: center; gap: 4px; width: 47px; padding-left: 1px; overflow: hidden; }
```
